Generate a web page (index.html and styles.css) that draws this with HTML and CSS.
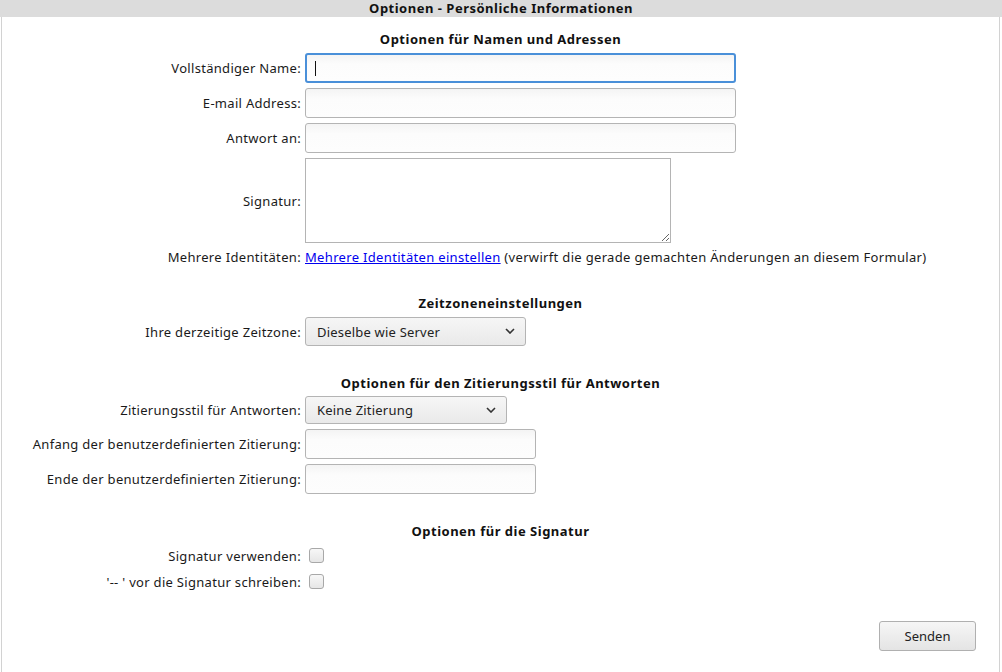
FILE: index.html
```html
<!DOCTYPE html>
<html lang="de">
<head>
<meta charset="utf-8">
<title>Optionen - Persönliche Informationen</title>
<link rel="stylesheet" href="styles.css">
</head>
<body>
<div class="header">Optionen - Persönliche Informationen</div>
<form class="panel">
  <div class="title">Optionen für Namen und Adressen</div>
  <div class="row">
    <label class="lbl">Vollständiger Name:</label>
    <div class="field">
      <input class="text wide focused" type="text" autofocus>
      <span class="caret"></span>
    </div>
  </div>
  <div class="row">
    <label class="lbl">E-mail Address:</label>
    <input class="text wide" type="text">
  </div>
  <div class="row">
    <label class="lbl">Antwort an:</label>
    <input class="text wide" type="text">
  </div>
  <div class="row">
    <label class="lbl">Signatur:</label>
    <textarea class="area"></textarea>
  </div>
  <div class="row line">
    <span class="lbl">Mehrere Identitäten:</span>
    <span><a href="#">Mehrere Identitäten einstellen</a> (verwirft die gerade gemachten Änderungen an diesem Formular)</span>
  </div>
  <div class="spacer"></div>
  <div class="title">Zeitzoneneinstellungen</div>
  <div class="row">
    <label class="lbl">Ihre derzeitige Zeitzone:</label>
    <div class="sel sel-tz">
      <select><option>Dieselbe wie Server</option></select>
      <svg class="chev" width="10" height="6" viewBox="0 0 10 6"><path d="M1 1 L5 5 L9 1" fill="none" stroke="#333" stroke-width="1.6"/></svg>
    </div>
  </div>
  <div class="spacer"></div>
  <div class="title">Optionen für den Zitierungsstil für Antworten</div>
  <div class="row row-q">
    <label class="lbl">Zitierungsstil für Antworten:</label>
    <div class="sel sel-q">
      <select><option>Keine Zitierung</option></select>
      <svg class="chev" width="10" height="6" viewBox="0 0 10 6"><path d="M1 1 L5 5 L9 1" fill="none" stroke="#333" stroke-width="1.6"/></svg>
    </div>
  </div>
  <div class="row">
    <label class="lbl">Anfang der benutzerdefinierten Zitierung:</label>
    <input class="text short" type="text">
  </div>
  <div class="row">
    <label class="lbl">Ende der benutzerdefinierten Zitierung:</label>
    <input class="text short" type="text">
  </div>
  <div class="spacer"></div>
  <div class="title">Optionen für die Signatur</div>
  <div class="row chk">
    <label class="lbl">Signatur verwenden:</label>
    <span class="box"></span>
  </div>
  <div class="row chk">
    <label class="lbl">'-- ' vor die Signatur schreiben:</label>
    <span class="box"></span>
  </div>
  <div class="actions">
    <button type="button" class="btn">Senden</button>
  </div>
</form>
</body>
</html>
```

FILE: styles.css
```css
html, body {
  margin: 0;
  padding: 0;
  background: #fff;
}
body {
  font-family: "Noto Sans", "Open Sans", "DejaVu Sans", sans-serif;
  font-size: 13px;
  letter-spacing: 0.3px;
  color: #1a1a1a;
  min-height: 672px;
  display: flex;
  flex-direction: column;
}
.header {
  height: 17px;
  line-height: 17px;
  background: #dcdcdc;
  text-align: center;
  font-weight: bold;
  letter-spacing: 0.5px;
  color: #111;
}
.panel {
  flex: 1;
  margin: 0 2px 0 1px;
  border-left: 1px solid #d2d2d2;
  border-right: 1px solid #d2d2d2;
  padding-top: 13px;
  display: flex;
  flex-direction: column;
  gap: 5px;
}
.title {
  text-align: center;
  font-weight: bold;
  letter-spacing: 0.5px;
  line-height: 18px;
  color: #111;
}
.row {
  display: grid;
  grid-template-columns: 299px 1fr;
  column-gap: 4px;
  align-items: center;
}
.row-q {
  margin-top: -1px;
}
.lbl {
  text-align: right;
  white-space: nowrap;
}
.line {
  line-height: 18px;
  white-space: nowrap;
  letter-spacing: 0.33px;
}
.line a {
  color: #0000ee;
  text-decoration: underline;
}
.spacer {
  height: 18px;
}
.field {
  position: relative;
  width: 431px;
  height: 30px;
}
.caret {
  position: absolute;
  left: 10px;
  top: 8px;
  width: 1px;
  height: 15px;
  background: #111;
}
.text {
  box-sizing: border-box;
  height: 30px;
  margin: 0;
  border: 1px solid #b4b4b4;
  border-radius: 3px;
  background: linear-gradient(#f4f4f4, #fcfcfc 35%, #fdfdfd);
  font: inherit;
  padding: 0 8px;
  outline: none;
  caret-color: transparent;
}
.text.focused,
.text:focus {
  border: 2px solid #4a90d9;
  padding: 0 7px;
}
.wide { width: 431px; }
.short { width: 231px; }
.area {
  box-sizing: border-box;
  width: 366px;
  height: 85px;
  margin: 0;
  border: 1px solid #b4b4b4;
  border-radius: 0;
  background: #fff;
  font: inherit;
  resize: both;
}
.sel {
  position: relative;
  height: 29px;
}
.sel select {
  appearance: none;
  -webkit-appearance: none;
  box-sizing: border-box;
  height: 29px;
  margin: 0;
  border: 1px solid #b4b4b4;
  border-radius: 3px;
  background: linear-gradient(#f6f6f6, #e9e9e9);
  font: inherit;
  letter-spacing: 0.2px;
  color: #222;
  padding: 0 30px 0 11px;
  outline: none;
}
.sel-tz, .sel-tz select { width: 221px; }
.sel-q, .sel-q select { width: 202px; }
.sel-q, .sel-q select { height: 28px; }
.chev {
  position: absolute;
  right: 11px;
  top: 11px;
  pointer-events: none;
}
.chk {
  height: 21px;
}
.box {
  box-sizing: border-box;
  display: block;
  width: 15px;
  height: 15px;
  margin-left: 4px;
  border: 1px solid #a8a8a8;
  border-radius: 3px;
  background: linear-gradient(#f7f7f7, #e6e6e6);
}
.actions {
  display: flex;
  justify-content: flex-end;
  padding-right: 23px;
  margin-top: 24px;
}
.btn {
  box-sizing: border-box;
  width: 97px;
  height: 30px;
  border: 1px solid #b0b0b0;
  border-radius: 3px;
  background: linear-gradient(#f6f6f6, #e4e4e4);
  font: inherit;
  color: #222;
}
```
